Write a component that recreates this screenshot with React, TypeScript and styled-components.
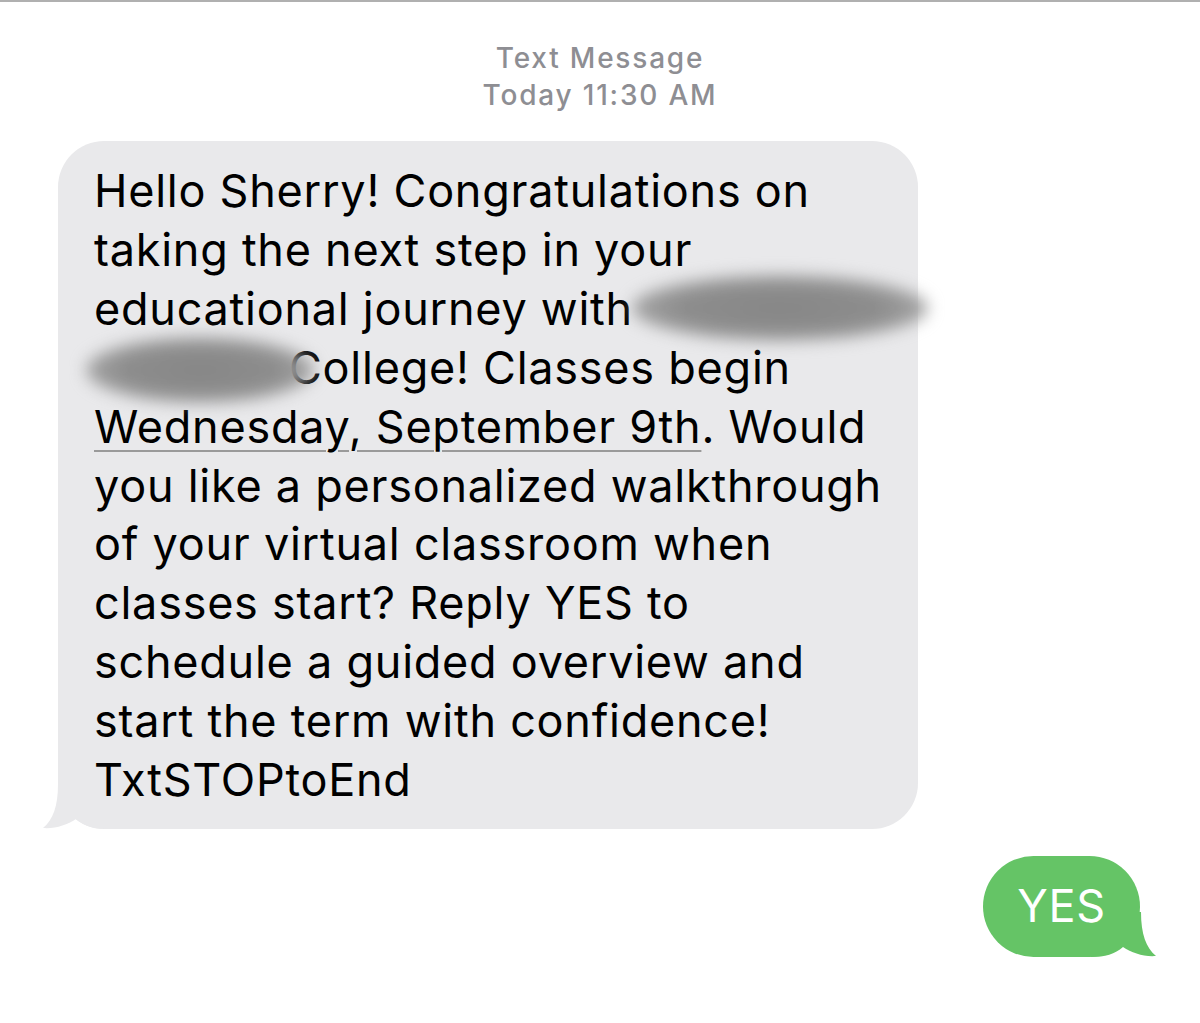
import styled, { createGlobalStyle } from 'styled-components';

const GlobalStyle = createGlobalStyle`
  html, body {
    margin: 0;
    padding: 0;
    background: #ffffff;
  }
  body {
    font-family: Inter, "Noto Sans", "Liberation Sans", sans-serif;
    -webkit-font-smoothing: antialiased;
  }
`;

const Screen = styled.div`
  width: 1200px;
  height: 1023px;
  box-sizing: border-box;
  border-top: 2px solid #b0b0b0;
  display: flex;
  flex-direction: column;
  overflow: hidden;
`;

const Header = styled.header`
  margin-top: 38px;
  display: flex;
  flex-direction: column;
  align-items: center;
  color: #8e8e93;
  font-size: 28px;
  line-height: 37px;
  font-weight: 500;
  letter-spacing: 1.8px;
`;

const Thread = styled.div`
  margin-top: 27px;
  display: flex;
  flex-direction: column;
  gap: 27px;
`;

const Row = styled.div<{ $out?: boolean }>`
  display: flex;
  justify-content: ${(p) => (p.$out ? 'flex-end' : 'flex-start')};
  padding: ${(p) => (p.$out ? '0 60px 0 0' : '0 0 0 58px')};
`;

const Bubble = styled.div<{ $out?: boolean }>`
  position: relative;
  box-sizing: border-box;
  background: ${(p) => (p.$out ? '#65c466' : '#e9e9eb')};
  color: ${(p) => (p.$out ? '#ffffff' : '#000000')};
  border-radius: ${(p) => (p.$out ? '51px' : '46px')};
  font-size: 45px;
  line-height: 58.9px;
  letter-spacing: 0.75px;
  white-space: nowrap;
  padding: ${(p) => (p.$out ? '21px 0 21px 0' : '21px 40px 19px 36px')};
  width: ${(p) => (p.$out ? '157px' : '860px')};
  text-align: ${(p) => (p.$out ? 'center' : 'left')};
`;

const Tail = styled.svg<{ $out?: boolean }>`
  position: absolute;
  bottom: 0;
  width: 66px;
  height: 45px;
  ${(p) => (p.$out ? 'right: -17px; transform: scaleX(-1);' : 'left: -16px;')}
`;

const Text = styled.span`
  position: relative;
  z-index: 1;
`;

const Spacer = styled.span<{ $w: number }>`
  display: inline-block;
  width: ${(p) => p.$w}px;
`;

const Link = styled.span`
  text-decoration: underline;
  text-decoration-color: #9a9a9a;
  text-decoration-thickness: 2px;
  text-underline-offset: 7px;
`;

const Redact = styled.span<{ $x: number; $y: number; $w: number; $h: number }>`
  position: absolute;
  z-index: 2;
  left: ${(p) => p.$x}px;
  top: ${(p) => p.$y}px;
  width: ${(p) => p.$w}px;
  height: ${(p) => p.$h}px;
  border-radius: 50%;
  background: radial-gradient(ellipse at center, #868686 0%, #8d8d8d 50%, rgba(165, 165, 165, 0.85) 78%, rgba(233, 233, 235, 0) 100%);
  filter: blur(8px);
`;

function BubbleTail({ out, color }: { out?: boolean; color: string }) {
  return (
    <Tail $out={out} viewBox="0 0 66 45">
      <path
        d="M16 0 C16 22 11 36 1 44 C13 45 25 41 34 35 C42 42 52 45 66 45 L66 0 Z"
        fill={color}
      />
    </Tail>
  );
}

export default function App() {
  return (
    <>
      <GlobalStyle />
      <Screen>
        <Header>
          <span>Text Message</span>
          <span>Today 11:30 AM</span>
        </Header>
        <Thread>
          <Row>
            <Bubble>
              <BubbleTail color="#e9e9eb" />
              <Text>
                Hello Sherry! Congratulations on
                <br />
                taking the next step in your
                <br />
                educational journey with
                <br />
                <Spacer $w={195} />College! Classes begin
                <br />
                <Link>Wednesday, September 9th</Link>. Would
                <br />
                you like a personalized walkthrough
                <br />
                of your virtual classroom when
                <br />
                classes start? Reply YES to
                <br />
                schedule a guided overview and
                <br />
                start the term with confidence!
                <br />
                TxtSTOPtoEnd
              </Text>
              <Redact $x={574} $y={134} $w={296} $h={66} />
              <Redact $x={28} $y={196} $w={228} $h={66} />
            </Bubble>
          </Row>
          <Row $out>
            <Bubble $out>
              <BubbleTail out color="#65c466" />
              <Text>YES</Text>
            </Bubble>
          </Row>
        </Thread>
      </Screen>
    </>
  );
}
